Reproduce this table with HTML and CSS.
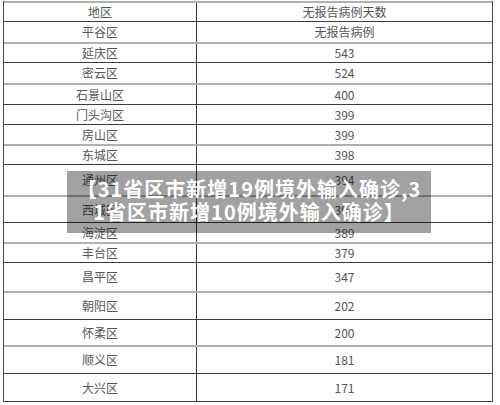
FILE: index.html
```html
<!DOCTYPE html>
<html lang="zh">
<head>
<meta charset="utf-8">
<link rel="stylesheet" href="styles.css">
</head>
<body>
<div class="page">
  <div class="table">
    <div class="row g h20"><div class="c1">地区</div><div class="c2">无报告病例天数</div></div>
    <div class="row d h21"><div class="c1">平谷区</div><div class="c2">无报告病例</div></div>
    <div class="row g h20"><div class="c1">延庆区</div><div class="c2">543</div></div>
    <div class="row d h21"><div class="c1">密云区</div><div class="c2">524</div></div>
    <div class="row g h21"><div class="c1">石景山区</div><div class="c2">400</div></div>
    <div class="row d h20"><div class="c1">门头沟区</div><div class="c2">399</div></div>
    <div class="row d h20"><div class="c1">房山区</div><div class="c2">399</div></div>
    <div class="row g h20"><div class="c1">东城区</div><div class="c2">398</div></div>
    <div class="row d h31"><div class="c1">通州区</div><div class="c2">394</div></div>
    <div class="row g h27"><div class="c1">西城区</div><div class="c2">390</div></div>
    <div class="row d h20"><div class="c1">海淀区</div><div class="c2">389</div></div>
    <div class="row g h20"><div class="c1">丰台区</div><div class="c2">379</div></div>
    <div class="row d h29"><div class="c1">昌平区</div><div class="c2">347</div></div>
    <div class="row g h28"><div class="c1">朝阳区</div><div class="c2">202</div></div>
    <div class="row d h26"><div class="c1">怀柔区</div><div class="c2">200</div></div>
    <div class="row g h28"><div class="c1">顺义区</div><div class="c2">181</div></div>
    <div class="row d h28 last"><div class="c1">大兴区</div><div class="c2">171</div></div>
  </div>
  <div class="banner">【31省区市新增19例境外输入确诊,31省区市新增10例境外输入确诊】</div>
</div>
</body>
</html>
```

FILE: styles.css
```css
* { box-sizing: border-box; }
html, body { margin: 0; padding: 0; background: #ffffff; }
.page {
  position: relative;
  width: 500px;
  height: 405px;
  padding: 1px 0 0 3px;
  font-family: "Noto Sans CJK SC", "Noto Sans", sans-serif;
}
.table {
  width: 490px;
  border-left: 1px solid #4a4a4a;
  border-right: 1px solid #4a4a4a;
}
.row {
  display: flex;
  align-items: stretch;
  font-size: 12px;
  color: #555555;
}
.row.g { border-top: 2px solid #b0b0b0; }
.row.d { border-top: 1px solid #3c3c3c; }
.row.last { border-bottom: 1px solid #3c3c3c; }
.h20 { height: 20px; }
.h21 { height: 21px; }
.h26 { height: 26px; }
.h27 { height: 27px; }
.h28 { height: 28px; }
.h29 { height: 29px; }
.h31 { height: 31px; }
.row.last.h28 { height: 29px; }
.c1, .c2 {
  display: flex;
  align-items: center;
  justify-content: center;
  line-height: 1;
}
.c1 {
  width: 193px;
  border-right: 1px solid #3c3c3c;
}
.c2 { flex: 1; }
.banner {
  position: absolute;
  left: 67px;
  top: 171px;
  width: 364px;
  height: 62px;
  padding: 6px 7px 0 7px;
  background: rgba(0, 0, 0, 0.37);
  color: #ffffff;
  font-weight: 700;
  font-size: 20px;
  letter-spacing: 1px;
  line-height: 23px;
  text-align: center;
  word-break: break-all;
}
```
